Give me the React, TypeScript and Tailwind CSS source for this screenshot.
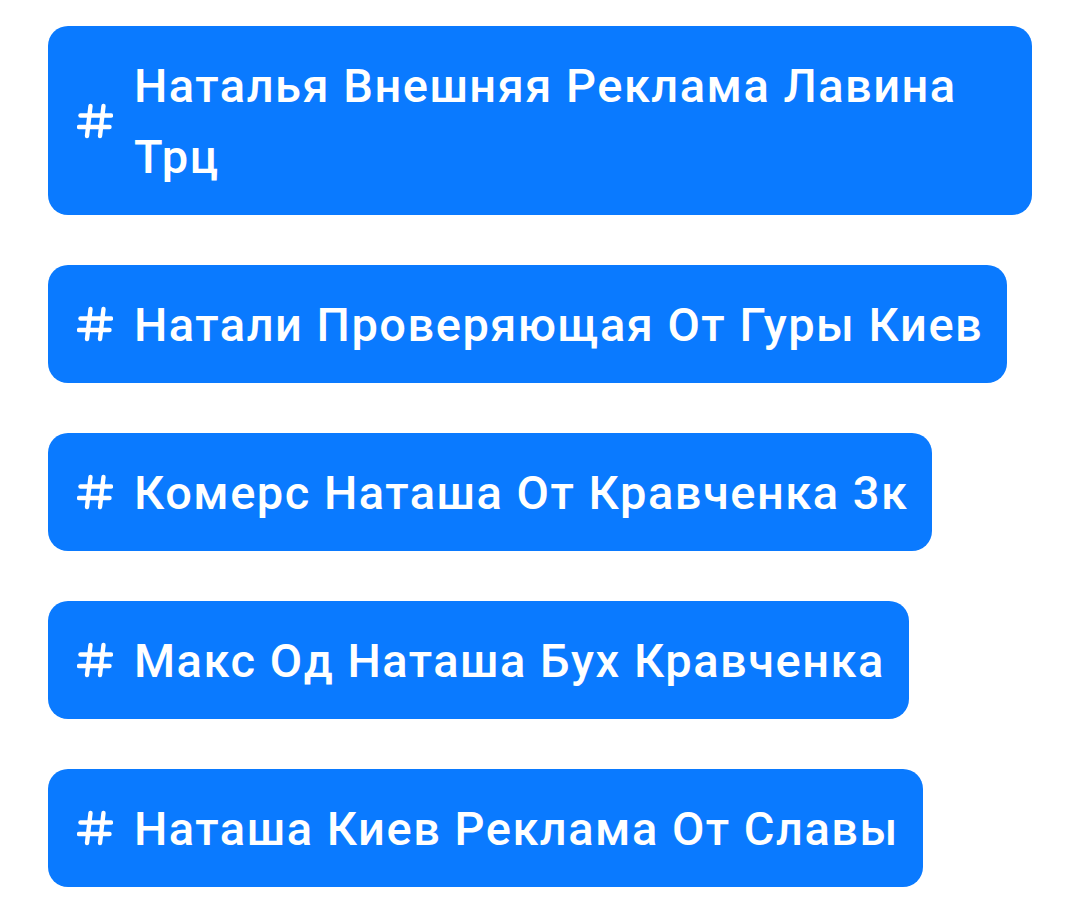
const tags = [
  "Наталья Внешняя Реклама Лавина Трц",
  "Натали Проверяющая От Гуры Киев",
  "Комерс Наташа От Кравченка 3к",
  "Макс Од Наташа Бух Кравченка",
  "Наташа Киев Реклама От Славы",
];

function Hash() {
  return (
    <svg width="36" height="36" viewBox="0 0 36 36" className="shrink-0" fill="none" stroke="white" strokeWidth="4.4" strokeLinecap="round">
      <path d="M13.5 3 L10 33" />
      <path d="M26.5 3 L23 33" />
      <path d="M3.5 12.5 L34 12.5" />
      <path d="M2 24 L32.5 24" />
    </svg>
  );
}

export default function App() {
  return (
    <div className="min-h-[912px] bg-white px-12 pt-[26px] font-['Roboto',sans-serif]">
      <div className="flex flex-col items-start gap-[50px]">
        {tags.map((t) => (
          <div key={t} className="flex items-center gap-[21px] rounded-[20px] bg-[#0a7aff] py-[23.5px] pl-[29px] pr-6 text-white">
            <Hash />
            <span className="text-[47px] font-medium leading-[71px] tracking-[1.5px]">{t}</span>
          </div>
        ))}
      </div>
    </div>
  );
}
